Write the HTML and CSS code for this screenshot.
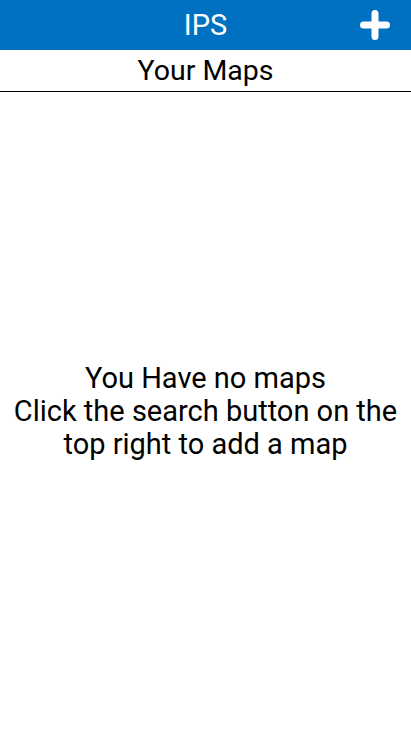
FILE: index.html
```html
<!DOCTYPE html>
<html>
<head>
<meta charset="utf-8">
<link rel="stylesheet" href="styles.css">
</head>
<body>
<div class="app">
  <header class="topbar">
    <h1 class="title">IPS</h1>
    <button class="add-btn" aria-label="Add map">
      <svg width="30" height="30" viewBox="0 0 30 30">
        <path d="M15 3.5V26.5M3.5 15H26.5" stroke="#fff" stroke-width="7" stroke-linecap="round" fill="none"/>
      </svg>
    </button>
  </header>
  <div class="subtitle">Your Maps</div>
  <main class="empty">
    <p class="empty-text">You Have no maps<br>Click the search button on the<br>top right to add a map</p>
  </main>
</div>
</body>
</html>
```
FILE: styles.css
```css
html, body {
  margin: 0;
  padding: 0;
  height: 100%;
  background: #fff;
}
body {
  font-family: Roboto, "Noto Sans", sans-serif;
  color: #000;
}
.app {
  display: flex;
  flex-direction: column;
  height: 100%;
}
.topbar {
  position: relative;
  height: 50px;
  background: #0070c0;
  display: flex;
  align-items: center;
  justify-content: center;
}
.title {
  margin: 0;
  font-size: 29px;
  font-weight: 400;
  color: #fff;
}
.add-btn {
  position: absolute;
  right: 21px;
  top: 10px;
  width: 30px;
  height: 30px;
  padding: 0;
  border: 0;
  background: none;
  display: block;
}
.add-btn svg { display: block; }
.subtitle {
  height: 41px;
  border-bottom: 1px solid #000;
  font-size: 28.5px;
  line-height: 42px;
  text-align: center;
}
.empty {
  flex: 1;
  display: flex;
  align-items: center;
  justify-content: center;
}
.empty-text {
  margin: 0;
  font-size: 29px;
  line-height: 33px;
  text-align: center;
}
```
